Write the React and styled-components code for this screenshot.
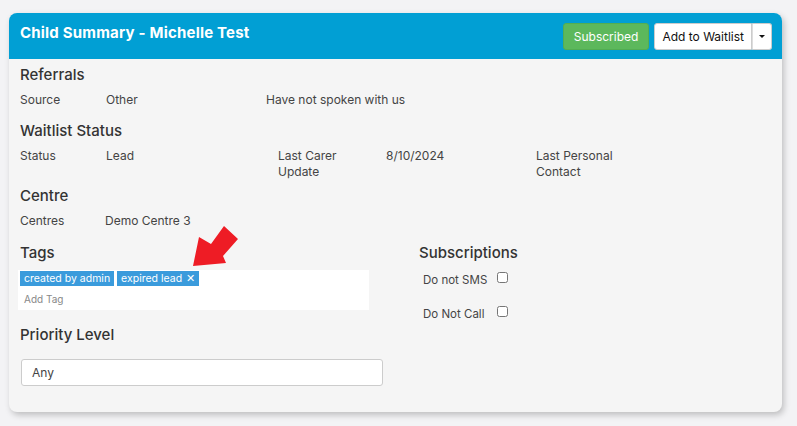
import styled, { createGlobalStyle } from 'styled-components';

const GlobalStyle = createGlobalStyle`
  html, body {
    margin: 0;
    background: #f3f3f5;
    font-family: 'Inter', 'Open Sans', sans-serif;
    color: #333;
  }
`;

function App() {
  return (
    <>
      <GlobalStyle />
      <Page>
        <Card>
          <Header>
            <Title>Child Summary - Michelle Test</Title>
            <Actions>
              <SubscribedButton>Subscribed</SubscribedButton>
              <SplitButton>
                <WhiteButton>Add to Waitlist</WhiteButton>
                <CaretButton><Caret /></CaretButton>
              </SplitButton>
            </Actions>
          </Header>
          <Body>
            <SectionTitle>Referrals</SectionTitle>
            <Row>
              <Cell $w={86}>Source</Cell>
              <Cell $w={160}>Other</Cell>
              <Cell>Have not spoken with us</Cell>
            </Row>

            <SectionTitle>Waitlist Status</SectionTitle>
            <Row $mb={5}>
              <Cell $w={86}>Status</Cell>
              <Cell $w={172}>Lead</Cell>
              <Cell $w={108}>Last Carer<br />Update</Cell>
              <Cell $w={150}>8/10/2024</Cell>
              <Cell>Last Personal<br />Contact</Cell>
            </Row>

            <SectionTitle>Centre</SectionTitle>
            <Row $mb={13}>
              <Cell $w={85}>Centres</Cell>
              <Cell>Demo Centre 3</Cell>
            </Row>

            <Columns>
              <Column>
                <SectionTitle>Tags</SectionTitle>
                <TagBox>
                  <TagList>
                    <Tag>created by admin</Tag>
                    <Tag>expired lead <Remove>✕</Remove></Tag>
                  </TagList>
                  <TagInput>Add Tag</TagInput>
                </TagBox>
                <SectionTitle $mt={14}>Priority Level</SectionTitle>
                <Select>Any</Select>
              </Column>
              <Column>
                <SectionTitle>Subscriptions</SectionTitle>
                <CheckRow>
                  <CheckLabel>Do not SMS</CheckLabel>
                  <Check type="checkbox" />
                </CheckRow>
                <CheckRow>
                  <CheckLabel>Do Not Call</CheckLabel>
                  <Check type="checkbox" />
                </CheckRow>
              </Column>
            </Columns>
          </Body>
          <Arrow viewBox="0 0 48 44">
            <polygon points="1,41 7,12 19,19 32,1 46,14 31,31 34,38" fill="#ee1c25" />
          </Arrow>
        </Card>
      </Page>
    </>
  );
}

const Page = styled.div`
  padding: 13px 15px 14px 9px;
`;

const Card = styled.div`
  position: relative;
  background: #f5f5f5;
  border-radius: 8px;
  overflow: hidden;
  box-shadow: 2px 3px 6px rgba(0, 0, 0, 0.22);
`;

const Header = styled.div`
  display: flex;
  align-items: center;
  justify-content: space-between;
  height: 46px;
  padding: 0 10px 0 11px;
  background: #019fd4;
`;

const Title = styled.h1`
  margin: 0 0 8px;
  font-size: 15px;
  font-weight: 700;
  letter-spacing: 0.2px;
  color: #fff;
`;

const Actions = styled.div`
  display: flex;
  align-items: center;
  gap: 5px;
`;

const SubscribedButton = styled.button`
  height: 27px;
  padding: 0 10px;
  border: 1px solid #52ad52;
  border-radius: 3px;
  background: #5cb85c;
  color: #fff;
  font-family: inherit;
  font-size: 12px;
`;

const SplitButton = styled.div`
  display: flex;
`;

const WhiteButton = styled.button`
  height: 27px;
  padding: 0 7px;
  border: 1px solid #ccc;
  border-radius: 3px 0 0 3px;
  background: #fff;
  color: #111;
  font-family: inherit;
  font-size: 12px;
`;

const CaretButton = styled(WhiteButton)`
  width: 20px;
  padding: 0;
  border-left: 1px solid #ddd;
  border-radius: 0 3px 3px 0;
  display: flex;
  align-items: center;
  justify-content: center;
`;

const Caret = styled.span`
  width: 0;
  height: 0;
  border-left: 3px solid transparent;
  border-right: 3px solid transparent;
  border-top: 3px solid #111;
`;

const Body = styled.div`
  padding: 5px 11px 26px;
`;

const SectionTitle = styled.h2`
  margin: ${(p) => p.$mt || 0}px 0 6px;
  font-size: 15px;
  line-height: 22px;
  font-weight: 500;
  color: #333;
`;

const Row = styled.div`
  display: flex;
  font-size: 12px;
  line-height: 16px;
  color: #444;
  margin-bottom: ${(p) => (p.$mb === undefined ? 12 : p.$mb)}px;
`;

const Cell = styled.div`
  flex: ${(p) => (p.$w ? `0 0 ${p.$w}px` : '1')};
`;

const Columns = styled.div`
  display: grid;
  grid-template-columns: 372px 1fr;
  gap: 27px;
`;

const Column = styled.div`
  display: flex;
  flex-direction: column;
`;

const TagBox = styled.div`
  width: 351px;
  height: 40px;
  margin-left: -2px;
  padding: 1px 2px;
  box-sizing: border-box;
  background: #fff;
`;

const TagList = styled.div`
  display: flex;
  gap: 3px;
`;

const Tag = styled.span`
  height: 15px;
  padding: 0 4px;
  background: #3a9bdc;
  color: #fff;
  font-size: 10.5px;
  line-height: 15px;
`;

const Remove = styled.span`
  margin-left: 1px;
  font-size: 11px;
`;

const TagInput = styled.div`
  margin: 7px 0 0 4px;
  font-size: 10px;
  color: #888;
`;

const Select = styled.div`
  width: 362px;
  height: 27px;
  margin: 7px 0 0 1px;
  padding: 0 10px;
  box-sizing: border-box;
  border: 1px solid #ccc;
  border-radius: 3px;
  background: #fff;
  font-size: 12px;
  line-height: 25px;
  color: #444;
`;

const CheckRow = styled.label`
  display: flex;
  align-items: center;
  height: 20px;
  margin: 0 0 14px 4px;
  font-size: 11.5px;
  color: #444;
`;

const CheckLabel = styled.span`
  width: 72px;
`;

const Check = styled.input`
  width: 11px;
  height: 11px;
  margin: -6px 0 0 2px;
`;

const Arrow = styled.svg`
  position: absolute;
  left: 183px;
  top: 212px;
  width: 48px;
  height: 44px;
`;

export default App;
